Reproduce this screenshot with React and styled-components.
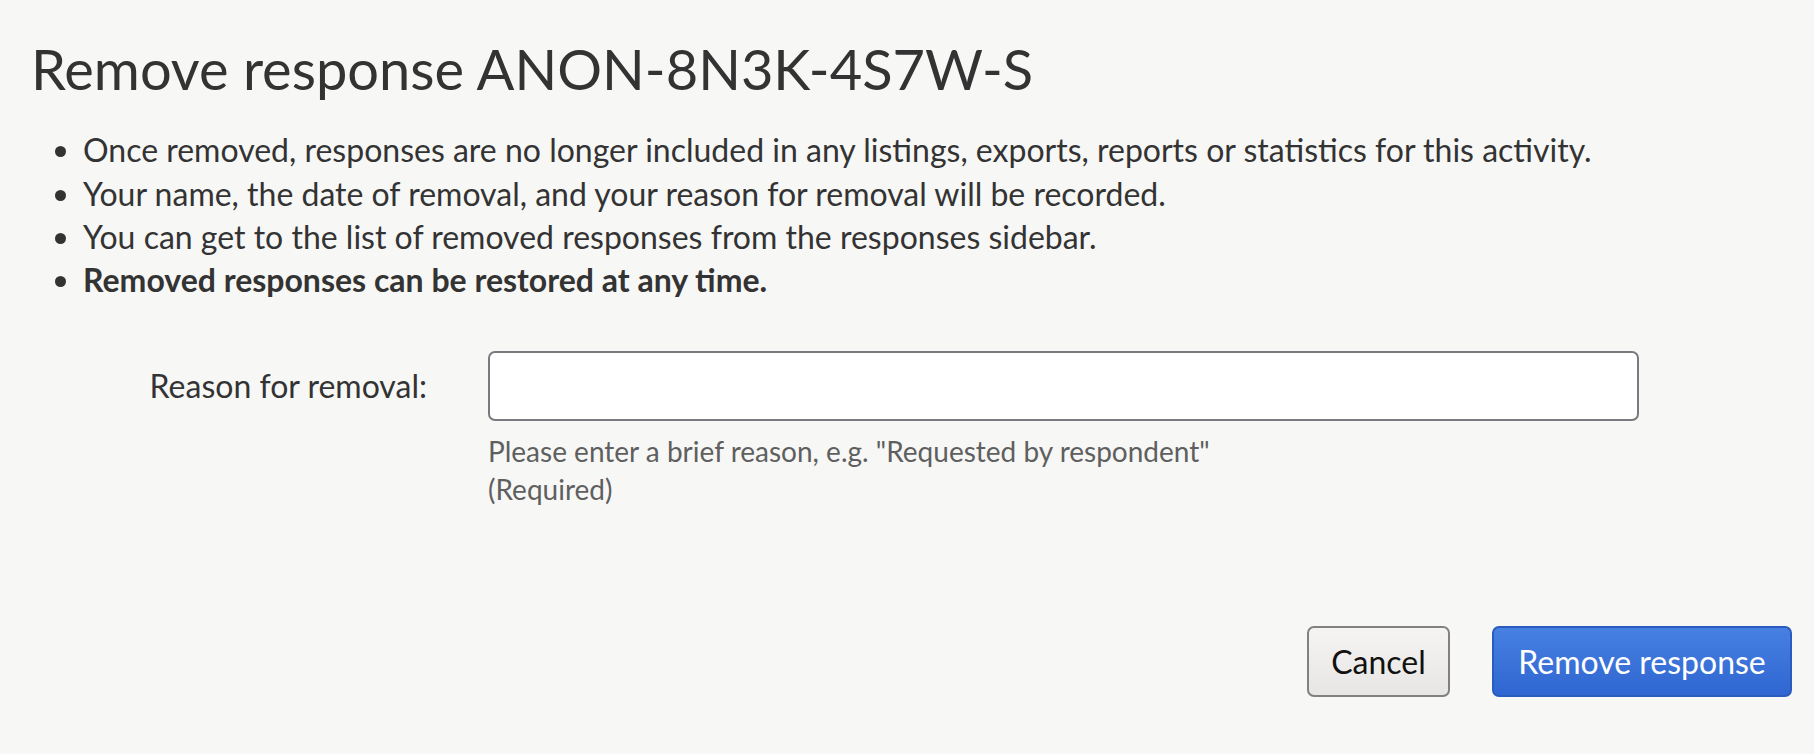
import React from "react";
import styled, { createGlobalStyle } from "styled-components";

const GlobalStyle = createGlobalStyle`
  html, body {
    margin: 0;
    padding: 0;
    background: #f7f7f6;
  }
  body {
    font-family: Lato, "Open Sans", sans-serif;
    color: #333;
  }
`;

function App() {
  return (
    <>
      <GlobalStyle />
      <Page>
        <Title>Remove response ANON-8N3K-4S7W-S</Title>
        <Notes>
          <li>
            Once removed, responses are no longer included in any listings,
            exports, reports or statistics for this activity.
          </li>
          <li>
            Your name, the date of removal, and your reason for removal will be
            recorded.
          </li>
          <li>
            You can get to the list of removed responses from the responses
            sidebar.
          </li>
          <li>
            <strong>Removed responses can be restored at any time.</strong>
          </li>
        </Notes>
        <FormRow>
          <Label htmlFor="reason">Reason for removal:</Label>
          <Field>
            <Input id="reason" type="text" />
            <Help>
              Please enter a brief reason, e.g. "Requested by respondent"
              <br />
              (Required)
            </Help>
          </Field>
        </FormRow>
        <Actions>
          <Button>Cancel</Button>
          <Button primary>Remove response</Button>
        </Actions>
      </Page>
    </>
  );
}

//styled components
const Page = styled.div`
  padding: 35px 22px 0 31px;
`;

const Title = styled.h1`
  margin: 0;
  font-size: 56px;
  font-weight: 400;
  line-height: 1.2;
  color: #333;
`;

const Notes = styled.ul`
  margin: 26px 0 0;
  padding-left: 52px;
  font-size: 32px;
  line-height: 43.4px;
  color: #333;
  strong {
    font-weight: 700;
  }
`;

const FormRow = styled.div`
  display: grid;
  grid-template-columns: 396px 1151px;
  column-gap: 61px;
  margin-top: 49px;
`;

const Label = styled.label`
  height: 70px;
  display: flex;
  align-items: center;
  justify-content: flex-end;
  font-size: 32px;
  color: #333;
`;

const Field = styled.div`
  display: flex;
  flex-direction: column;
`;

const Input = styled.input`
  box-sizing: border-box;
  width: 100%;
  height: 70px;
  border: 2px solid #7a797e;
  border-radius: 7px;
  background: #fff;
  font: inherit;
  font-size: 32px;
  padding: 0 14px;
  outline: none;
`;

const Help = styled.div`
  margin-top: 11px;
  font-size: 28px;
  line-height: 38px;
  color: #5f5f5f;
`;

const Actions = styled.div`
  display: flex;
  justify-content: flex-end;
  gap: 42px;
  margin-top: 118px;
`;

const Button = styled.button`
  box-sizing: border-box;
  height: 71px;
  padding: 0 22px;
  min-width: ${(p) => (p.primary ? "300px" : "143px")};
  border-radius: 7px;
  font-family: Lato, "Open Sans", sans-serif;
  font-size: 32px;
  cursor: pointer;
  color: ${(p) => (p.primary ? "#fff" : "#111")};
  border: 2px solid ${(p) => (p.primary ? "#2a5cc0" : "#818181")};
  background: ${(p) =>
    p.primary
      ? "linear-gradient(#4780e2, #2f66d1)"
      : "linear-gradient(#f6f4f2, #e8e6e4)"};
`;

export default App;
